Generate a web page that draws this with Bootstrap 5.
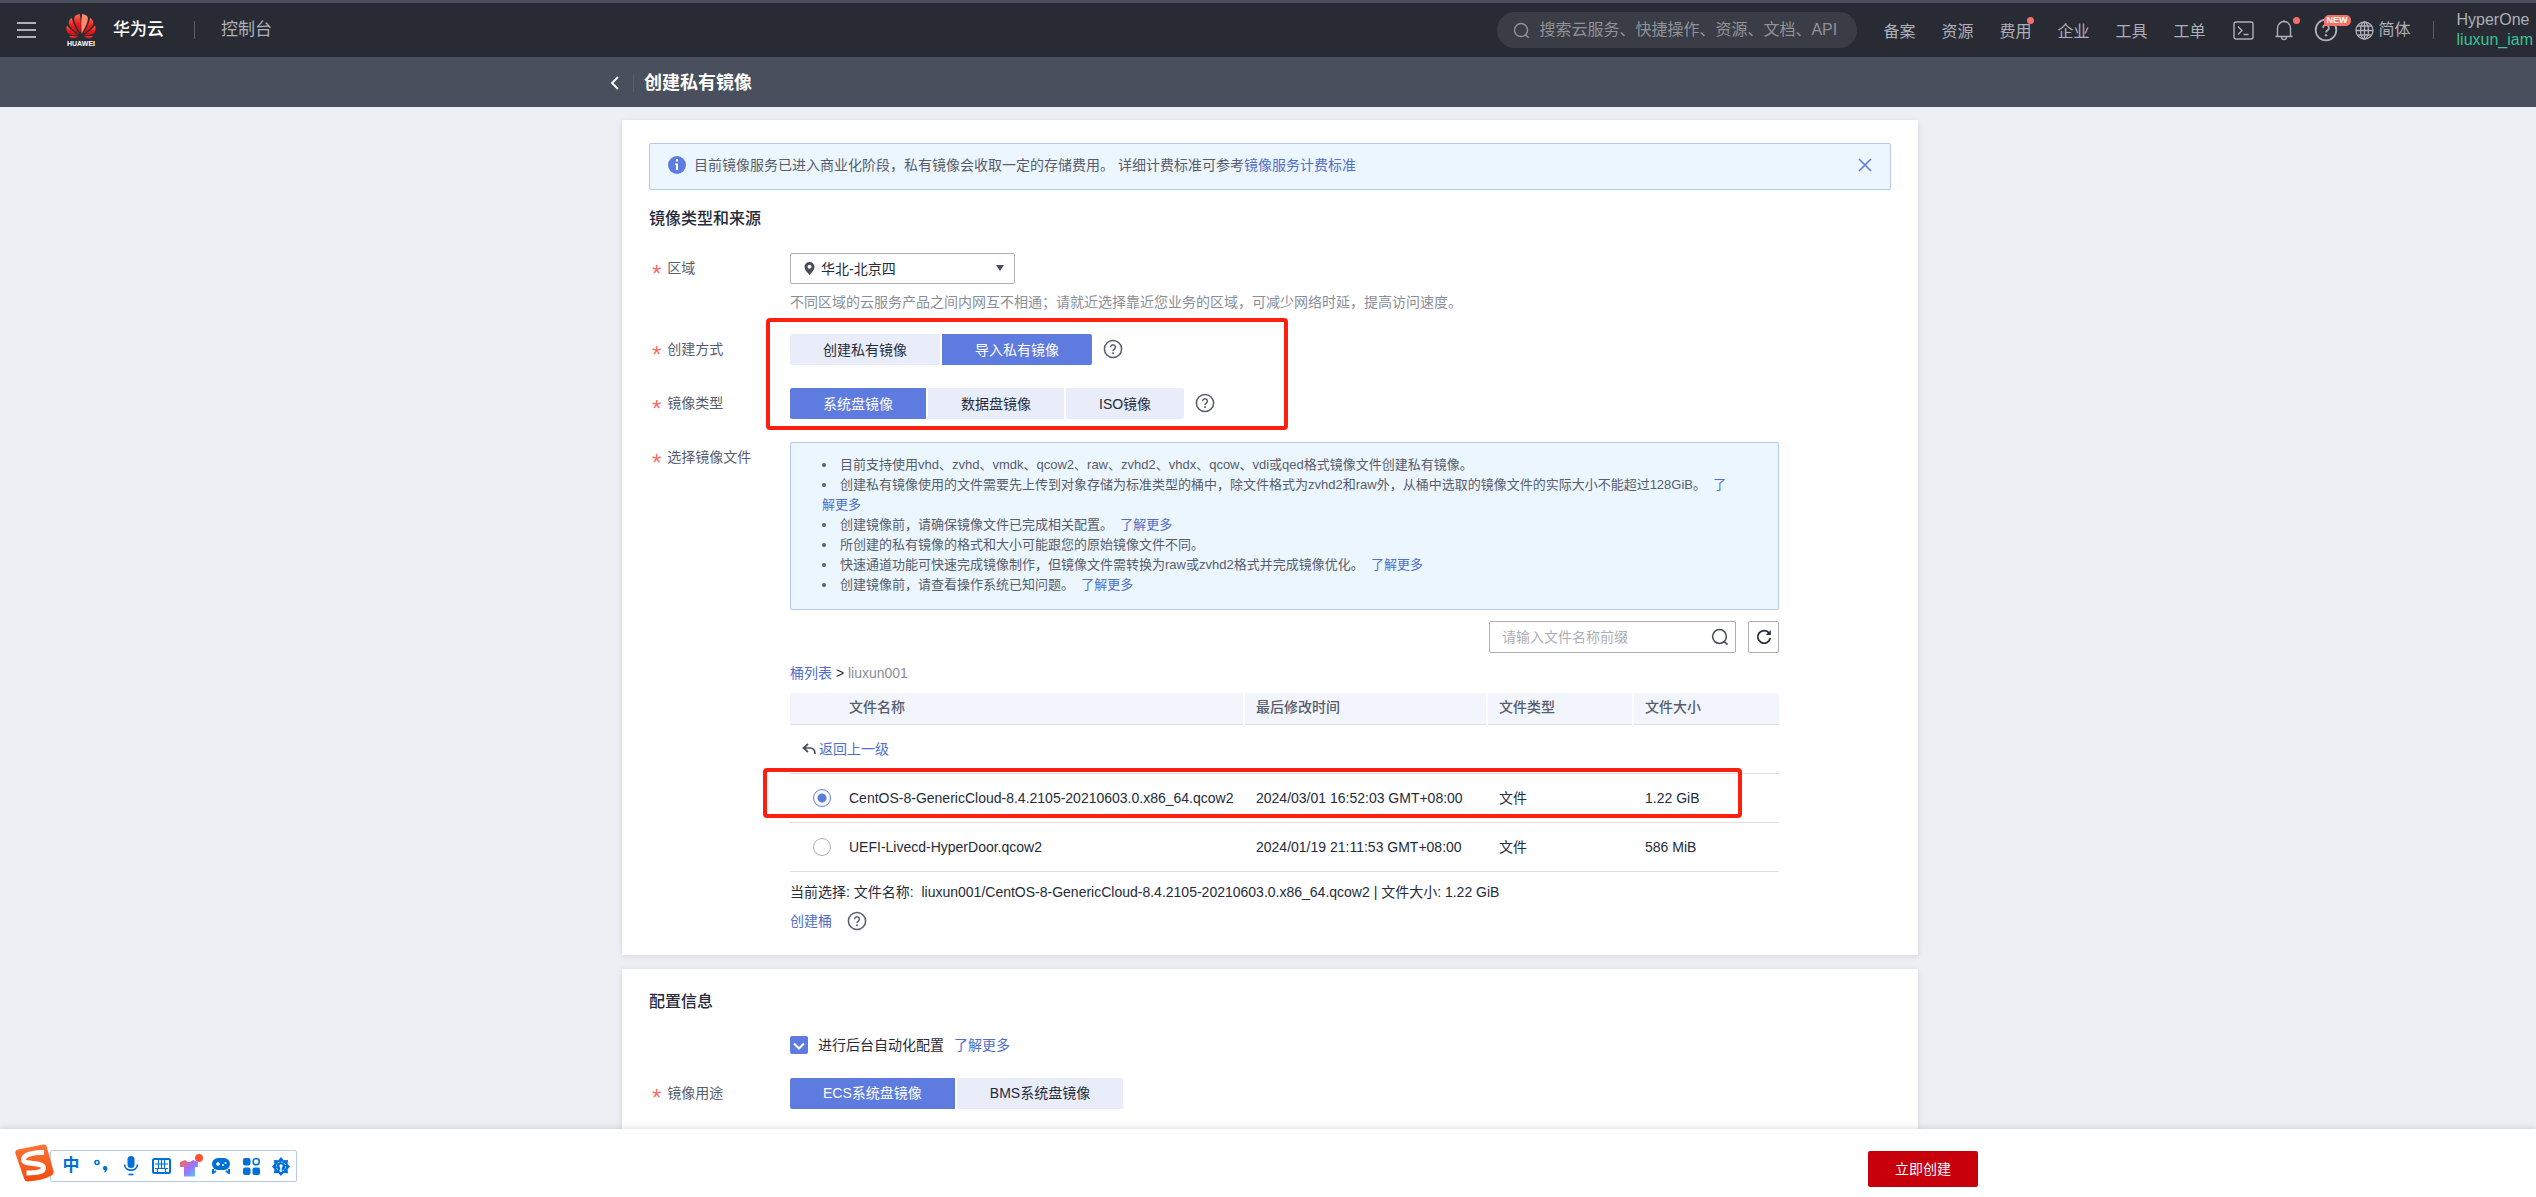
<!DOCTYPE html>
<html lang="zh-CN">
<head>
<meta charset="utf-8">
<meta name="viewport" content="width=device-width, initial-scale=1">
<title>创建私有镜像</title>
<link href="https://cdn.jsdelivr.net/npm/bootstrap@5.3.0/dist/css/bootstrap.min.css" rel="stylesheet">
<style>
body{font-family:"Liberation Sans","Noto Sans CJK SC",sans-serif;font-size:14px;line-height:20px;color:#252b3a;background:#eeeff4}
a{color:#526ecc;text-decoration:none}
button,input,select{font-family:inherit}
svg{display:block;flex:none}
.topnav{background:#282b33;border-top:3px solid #494f5c;height:57px;color:#adb0b8;font-size:16px;padding-left:17px;z-index:3}
.topnav a{color:inherit}
.topnav .logo{margin-left:30px}
.topnav .brandname{color:#fff;font-size:17px;font-weight:500;margin-left:17px}
.topnav .console{font-size:17px;margin-left:26px}
.vline{width:1px;height:18px;background:#575d6c}
.pill{width:360px;height:36px;border-radius:18px;background:#3a3d45;padding:0 16px;gap:9px}
.pill input{background:none;border:0;outline:0;color:#adb0b8;font-size:16px;padding:0}
.pill input::placeholder{color:#8f9299;opacity:1}
.links{gap:26px;margin-left:26px;padding-top:3px}
.plainbtn{background:none;border:0;padding:0;color:inherit}
.reddot{position:absolute;width:7px;height:7px;border-radius:50%;background:#f66f6a}
.dot-text{right:-3px;top:-5px}
.dot-bell{right:-6px;top:-2px}
.newtag{position:absolute;left:10px;top:-3px;background:#f66f6a;color:#fff;font-size:9px;line-height:11px;padding:0 3px;border-radius:5px 5px 5px 0;font-weight:700}
.account{line-height:20px;margin-left:23px;margin-right:3px}
.account .iam{color:#3ac295}
.titlebar{background:#494f5c;height:50px;color:#fff}
.frame{width:100%;max-width:1300px;margin:0 auto;padding-left:4px}
.titlebar .frame{max-width:1324px;padding-top:2px}
.titlebar h1{font-size:18px;line-height:24px;font-weight:700;margin:0 0 0 10px}
.panel{background:#fff;box-shadow:0 1px 6px rgba(37,43,58,.12);padding:23px 27px 24px}
.notice{background:#ebf6ff;border:1px solid #b3c7f9;border-radius:2px;min-height:47px;padding:0 18px 3px;color:#575d6c}
.sect{font-size:16px;line-height:24px;font-weight:500;margin:17px 0 0}
.formrow{display:flex;margin-top:23px}
.flabel{width:141px;flex:none;height:30px;padding-left:3px;color:#575d6c;gap:6px}
.star{color:#f66f6a;font-size:24px;line-height:20px;padding-top:11px}
.field{max-width:989px}
.region{width:225px}
.region select{width:100%;height:31px;border:1px solid #adb0b8;border-radius:2px;appearance:none;background:#fff;padding:0 30px;color:#252b3a;font-size:14px}
.region .pin{position:absolute;left:14px;top:9px;pointer-events:none}
.region .caret{position:absolute;right:11px;top:12px;pointer-events:none}
.hint{color:#8a8e99;margin-top:8px}
.seg{gap:2px}
.seg button{height:31px;border:0;background:#e9edfa;padding:0 33px;color:#252b3a}
.seg button.on{background:#5e7ce0;color:#fff}
.seg button:first-child{border-radius:2px 0 0 2px}
.seg button:last-child{border-radius:0 2px 2px 0}
.qmark{width:20px;height:20px;color:#575d6c}
.seg+.qmark{margin:5px 0 0 11px}
.circled{position:absolute;border:4px solid #ff1f10;border-radius:4px;pointer-events:none;z-index:2}
.circled-modes{left:117px;top:-16px;width:522px;height:112px}
.circled-file{left:-27px;right:37px;top:75px;height:50px}
.tips{background:#ebf6ff;border:1px solid #b3c7f9;border-radius:2px;color:#575d6c;font-size:13px;padding:12px 42px 14px 31px;margin:0;list-style:disc inside}
.finder{width:247px}
.finder input{width:100%;height:32px;border:1px solid #adb0b8;border-radius:2px;padding:0 36px 0 12px;outline:0}
.finder input::placeholder{color:#adb0b8;opacity:1}
.finder button{position:absolute;right:7px;top:7px}
.reload{width:31px;height:32px;border:1px solid #adb0b8;border-radius:2px;background:#fff;color:#252b3a}
.files{width:100%;table-layout:fixed;border-collapse:collapse;margin:0}
.files th{height:31px;background:#f2f5fc;color:#575d6c;font-weight:500;padding:0 0 2px 12px}
.files th+th+th{border-left:2px solid #fff;padding-left:11px}
.files tr{border-bottom:1px solid #dfe1e6}
.files td{height:49px;padding:0 0 0 12px}
.files td.pick{padding-left:23px}
.files input{appearance:none;display:block;width:18px;height:18px;border:1px solid #adb0b8;border-radius:50%;margin:0;background:#fff}
.files input:checked{border-color:#5e7ce0;background:radial-gradient(circle,#5e7ce0 4px,#fff 5px)}
.tick{appearance:none;width:18px;height:18px;border-radius:2px;margin:0;background:#5e7ce0}
.tickmark{position:absolute;left:3px;top:4px;pointer-events:none}
.actionbar{background:#fff;height:68px;box-shadow:0 -1px 6px rgba(37,43,58,.15);padding-top:22px;z-index:3}
.actionbar .frame{max-width:1420px}
.gobtn{width:110px;height:36px;border:0;border-radius:2px;background:#c7000b;color:#fff}
.ime{position:absolute;left:15px;top:15px}
.ime .tray{margin-left:-5px;margin-top:6px;border:1px solid #b8cbe0;border-radius:2px;height:32px;width:247px;background:#fff;padding-left:5px;color:#0070d9}
.ime .tray>*{width:30px;display:flex;justify-content:center}
.ime .lang{font-weight:700;font-size:17px}
</style>
</head>
<body class="vh-100 d-flex flex-column overflow-hidden">
<svg width="0" height="0" class="position-absolute" aria-hidden="true">
<symbol id="help" viewBox="0 0 20 20"><circle cx="10" cy="10" r="8.6" fill="none" stroke="currentColor" stroke-width="1.5"/><path d="M7.6 8.2a2.4 2.4 0 1 1 3.7 2c-.9.6-1.3 1-1.3 1.900" fill="none" stroke="currentColor" stroke-width="1.5"/><circle cx="10" cy="14.3" r="1" fill="currentColor"/></symbol>
<symbol id="lens" viewBox="0 0 18 18"><circle cx="8.5" cy="8.5" r="6.9" fill="none" stroke="currentColor" stroke-width="1.5"/><path d="M13 13.4l3.6 3.3" stroke="currentColor" stroke-width="1.6"/></symbol>
</svg>
<header class="topnav d-flex align-items-center flex-shrink-0">
  <button class="plainbtn" aria-label="菜单"><svg width="19" height="16"><path d="M0 1h19M0 8h19M0 15h19" stroke="#adb0b8" stroke-width="2"/></svg></button>
  <a href="#" class="logo" aria-label="华为"><svg width="30" height="34" viewBox="0 0 30 34">
    <defs><linearGradient id="hw" x1="0" y1="0" x2="0" y2="1"><stop offset="0" stop-color="#ff6a50"/><stop offset=".5" stop-color="#f01a1a"/><stop offset="1" stop-color="#c01016"/></linearGradient></defs>
    <g fill="url(#hw)"><path d="M14.4 20.5C10.500 14.500 7.800 8.500 8.200 4.800 8.500 2.600 11 1.300 13.600 1c1.300 4.400 1.400 13.500.8 19.500z"/><path d="M15.600 20.500C19.500 14.500 22.200 8.500 21.800 4.800 21.500 2.600 19 1.300 16.400 1c-1.300 4.400-1.400 13.500-.8 19.500z" fill="#ff8a6a"/><path d="M13.300 21.200C8 17.800 3.200 14 2.700 10.400 2.400 8.100 4 5.800 5.800 4.700c1.200 5.800 4.600 12.300 7.500 16.500z"/><path d="M16.700 21.200c5.300-3.400 10.100-7.200 10.600-10.800.3-2.300-1.300-4.600-3.100-5.700-1.200 5.800-4.600 12.300-7.500 16.500z"/><path d="M12.800 22.300C7.800 22.600 2.900 22 1.200 19.200.1 17.200.4 14.400 1 12.600c3 4.200 7.600 7.300 11.800 9.700z"/><path d="M17.200 22.300c5 .3 9.900-.3 11.600-3.100 1.100-2 .8-4.800.2-6.600-3 4.200-7.600 7.300-11.800 9.700z"/><path d="M12.300 23.400c-2.300 1.400-4.600 2.300-6.300 1.900-1.400-.3-2.300-1.300-2.700-2.300 3 .4 6 .5 9 .4z"/><path d="M17.700 23.400c2.300 1.400 4.600 2.300 6.300 1.900 1.400-.3 2.300-1.300 2.700-2.300-3 .4-6 .5-9 .4z"/></g>
    <text x="1" y="33" fill="#fff" font-size="7" font-weight="700">HUAWEI</text></svg></a>
  <a href="#" class="brandname">华为云</a>
  <span class="vline" style="margin-left:30px"></span>
  <a href="#" class="console">控制台</a>
  <label class="pill d-flex align-items-center ms-auto"><svg width="17" height="17" style="color:#8f9299"><use href="#lens"/></svg><input class="flex-grow-1" type="text" aria-label="搜索" placeholder="搜索云服务、快捷操作、资源、文档、API"></label>
  <nav class="links d-flex">
    <a href="#">备案</a><a href="#">资源</a><a href="#" class="position-relative">费用<i class="reddot dot-text"></i></a><a href="#">企业</a><a href="#">工具</a><a href="#">工单</a>
  </nav>
  <button class="plainbtn" style="margin-left:27px" aria-label="终端"><svg width="21" height="19" viewBox="0 0 21 19" fill="none" stroke="currentColor" stroke-width="1.4"><rect x="1" y="1" width="19" height="17" rx="2"/><path d="M5 5.500l4 4-4 4M10.500 13.500h5"/></svg></button>
  <button class="plainbtn position-relative" style="margin-left:20px" aria-label="通知"><svg width="20" height="22" viewBox="0 0 20 22" fill="none" stroke="currentColor" stroke-width="1.400"><path d="M1.500 17.500h17M3.500 17V9a6.500 6.500 0 0 1 13 0v8M7.500 18c.2 3.500 4.800 3.500 5 0M10 2.500V1"/></svg><i class="reddot dot-bell"></i></button>
  <button class="plainbtn position-relative" style="margin-left:20px" aria-label="帮助"><svg width="24" height="24"><use href="#help"/></svg><span class="newtag">NEW</span></button>
  <a href="#" class="d-flex align-items-center" style="margin-left:17px;gap:5px"><svg width="19" height="19" viewBox="0 0 19 19" fill="none" stroke="currentColor" stroke-width="1.300"><circle cx="9.500" cy="9.500" r="8.500"/><ellipse cx="9.500" cy="9.500" rx="4" ry="8.500"/><path d="M1 9.500h17M9.500 1v17M2.500 5h14M2.500 14h14"/></svg>简体</a>
  <span class="vline" style="margin-left:22px"></span>
  <div class="account"><div>HyperOne</div><div class="iam">liuxun_iam</div></div>
</header>
<div class="titlebar d-flex align-items-center flex-shrink-0">
  <div class="frame d-flex align-items-center">
    <a href="#" aria-label="返回"><svg width="9" height="14" viewBox="0 0 9 14"><path d="M8 1L2 7l6 6" fill="none" stroke="#fff" stroke-width="1.800"/></svg></a>
    <span class="vline" style="margin-left:14px"></span>
    <h1>创建私有镜像</h1>
  </div>
</div>
<main class="flex-grow-1 overflow-hidden d-flex" style="min-height:0">
  <div class="frame d-flex flex-column" style="padding-top:13px;gap:14px">
    <section class="panel">
      <div class="notice d-flex align-items-center">
        <svg width="18" height="18" class="me-2"><circle cx="9" cy="9" r="9" fill="#5e7ce0"/><rect x="8" y="3" width="2" height="2.500" fill="#fff"/><path d="M7 7.500h3v6.500h-2v-5H7z" fill="#fff"/></svg>
        <div>目前镜像服务已进入商业化阶段，私有镜像会收取一定的存储费用。 详细计费标准可参考<a href="#">镜像服务计费标准</a></div>
        <button class="plainbtn ms-auto" aria-label="关闭"><svg width="14" height="14"><path d="M1 1l12 12M13 1L1 13" stroke="#5e7ce0" stroke-width="1.600"/></svg></button>
      </div>
      <h2 class="sect">镜像类型和来源</h2>
      <div class="formrow" style="margin-top:22px">
        <label class="flabel d-flex align-items-center" for="region"><span class="star">*</span>区域</label>
        <div>
          <div class="region position-relative">
            <select id="region"><option>华北-北京四</option></select>
            <svg class="pin" width="11" height="13" viewBox="0 0 11 13"><path d="M5.500 0A5 5 0 0 0 .5 5c0 3 3 5.500 5 8 2-2.500 5-5 5-8a5 5 0 0 0-5-5z" fill="#464c59"/><circle cx="5.500" cy="4.800" r="2" fill="#fff"/></svg>
            <svg class="caret" width="8" height="6"><path d="M0 0h8L4 6z" fill="#464c59"/></svg>
          </div>
          <div class="hint">不同区域的云服务产品之间内网互不相通；请就近选择靠近您业务的区域，可减少网络时延，提高访问速度。</div>
        </div>
      </div>
      <div class="position-relative" style="margin-top:22px">
        <div class="formrow mt-0">
          <div class="flabel d-flex align-items-center"><span class="star">*</span>创建方式</div>
          <div class="seg d-flex" role="group" aria-label="创建方式"><button>创建私有镜像</button><button class="on">导入私有镜像</button></div>
          <svg class="qmark"><use href="#help"/></svg>
        </div>
        <div class="formrow">
          <div class="flabel d-flex align-items-center"><span class="star">*</span>镜像类型</div>
          <div class="seg d-flex" role="group" aria-label="镜像类型"><button class="on">系统盘镜像</button><button>数据盘镜像</button><button>ISO镜像</button></div>
          <svg class="qmark"><use href="#help"/></svg>
        </div>
        <div class="circled circled-modes"></div>
      </div>
      <div class="formrow">
        <div class="flabel d-flex align-items-center"><span class="star">*</span>选择镜像文件</div>
        <div class="field flex-grow-1">
          <ul class="tips">
            <li>目前支持使用vhd、zvhd、vmdk、qcow2、raw、zvhd2、vhdx、qcow、vdi或qed格式镜像文件创建私有镜像。</li>
            <li>创建私有镜像使用的文件需要先上传到对象存储为标准类型的桶中，除文件格式为zvhd2和raw外，从桶中选取的镜像文件的实际大小不能超过128GiB。&nbsp; <a href="#">了解更多</a></li>
            <li>创建镜像前，请确保镜像文件已完成相关配置。&nbsp; <a href="#">了解更多</a></li>
            <li>所创建的私有镜像的格式和大小可能跟您的原始镜像文件不同。</li>
            <li>快速通道功能可快速完成镜像制作，但镜像文件需转换为raw或zvhd2格式并完成镜像优化。&nbsp; <a href="#">了解更多</a></li>
            <li>创建镜像前，请查看操作系统已知问题。&nbsp; <a href="#">了解更多</a></li>
          </ul>
          <div class="d-flex justify-content-end" style="margin-top:11px;gap:12px">
            <div class="finder position-relative"><input type="text" aria-label="文件名称前缀" placeholder="请输入文件名称前缀"><button class="plainbtn" style="color:#464c59" aria-label="搜索"><svg width="18" height="18"><use href="#lens"/></svg></button></div>
            <button class="reload d-flex align-items-center justify-content-center p-0" aria-label="刷新"><svg width="16" height="16" viewBox="0 0 16 16"><path d="M13.200 4.200A6.300 6.300 0 1 0 14.300 9" fill="none" stroke="currentColor" stroke-width="1.700"/><path d="M14.800 1v5h-5z" fill="currentColor"/></svg></button>
          </div>
          <div style="margin:10px 0"><a href="#">桶列表</a> &gt; <span style="color:#8a8e99">liuxun001</span></div>
          <div class="position-relative">
            <table class="files">
              <colgroup><col style="width:47px"><col><col style="width:243px"><col style="width:146px"><col style="width:146px"></colgroup>
              <thead><tr><th></th><th>文件名称</th><th>最后修改时间</th><th>文件类型</th><th>文件大小</th></tr></thead>
              <tbody>
                <tr><td colspan="5"><a href="#" class="d-flex align-items-center" style="gap:3px"><svg width="14" height="12" viewBox="0 0 14 12"><path d="M6 1L1.500 5 6 9M2 5h6c3 0 5 2 5 6" fill="none" stroke="#464c59" stroke-width="1.700"/></svg>返回上一级</a></td></tr>
                <tr><td class="pick"><input type="radio" name="file" id="f1" checked></td><td><label for="f1">CentOS-8-GenericCloud-8.4.2105-20210603.0.x86_64.qcow2</label></td><td>2024/03/01 16:52:03 GMT+08:00</td><td>文件</td><td>1.22 GiB</td></tr>
                <tr><td class="pick"><input type="radio" name="file" id="f2"></td><td><label for="f2">UEFI-Livecd-HyperDoor.qcow2</label></td><td>2024/01/19 21:11:53 GMT+08:00</td><td>文件</td><td>586 MiB</td></tr>
              </tbody>
            </table>
            <div class="circled circled-file"></div>
          </div>
          <div style="margin-top:10px">当前选择: 文件名称:&nbsp; liuxun001/CentOS-8-GenericCloud-8.4.2105-20210603.0.x86_64.qcow2 | 文件大小: 1.22 GiB</div>
          <div class="d-flex align-items-center" style="margin-top:9px;gap:15px"><a href="#">创建桶</a><svg class="qmark"><use href="#help"/></svg></div>
        </div>
      </div>
    </section>
    <section class="panel flex-grow-1" style="padding-top:4px">
      <h2 class="sect">配置信息</h2>
      <div class="d-flex align-items-center" style="margin:21px 0 0 141px;gap:10px">
        <span class="position-relative d-flex"><input class="tick" type="checkbox" id="auto" checked><svg class="tickmark" width="12" height="10"><path d="M1 3.500l5 5 5-5" fill="none" stroke="#fff" stroke-width="2"/></svg></span>
        <label for="auto">进行后台自动化配置</label><a href="#">了解更多</a>
      </div>
      <div class="formrow">
        <div class="flabel d-flex align-items-center"><span class="star">*</span>镜像用途</div>
        <div class="seg d-flex" role="group" aria-label="镜像用途"><button class="on">ECS系统盘镜像</button><button>BMS系统盘镜像</button></div>
      </div>
    </section>
  </div>
</main>
<footer class="actionbar position-relative flex-shrink-0">
  <div class="frame d-flex justify-content-end"><button class="gobtn">立即创建</button></div>
  <div class="ime d-flex align-items-center">
    <svg width="40" height="38" viewBox="0 0 40 38" style="z-index:1"><defs><linearGradient id="sg" x1="0" y1="0" x2="0" y2="1"><stop offset="0" stop-color="#ff7336"/><stop offset="1" stop-color="#f04c10"/></linearGradient></defs><path d="M3 5.500L28 .6q3-.6 3.800 2.200L38.500 27q.8 3-2 4.500-9 5-23.500 6-3 .2-3.800-2.600L.4 9.500Q-.4 6.300 3 5.500z" fill="url(#sg)"/><path d="M29 8.500C20 8 8 10 8.500 16c.5 5 19 2 20 7.500.8 4.500-7 5.500-17 5.500" fill="none" stroke="#fff" stroke-width="5"/></svg>
    <div class="tray d-flex align-items-center">
      <span class="lang">中</span>
      <span><svg width="16" height="16" viewBox="0 0 16 16"><circle cx="4" cy="4.500" r="2" fill="none" stroke="currentColor" stroke-width="1.600"/><path d="M12 8a2 2 0 1 0 0 4.200c0 1-.5 1.800-1.500 2.300C13 14.500 14.500 12.500 14.400 10A2.300 2.300 0 0 0 12 8z" fill="currentColor"/></svg></span>
      <span><svg width="16" height="20" viewBox="0 0 16 20"><rect x="4.500" y="0" width="7" height="12" rx="3.500" fill="currentColor"/><path d="M1.500 8.500c.5 7.500 12.500 7.500 13 0" fill="none" stroke="currentColor" stroke-width="1.700"/><path d="M5.500 18.500h5" stroke="currentColor" stroke-width="1.700"/></svg></span>
      <span><svg width="19" height="16" viewBox="0 0 19 16"><rect x="1" y="1" width="17" height="14" rx="1.500" fill="none" stroke="currentColor" stroke-width="2"/><path d="M3 6h13M3 10.500h13M6.500 2v8.500M9.500 2v8.500M12.500 2v8.500M5.500 10v4M13.500 10v4" stroke="currentColor" stroke-width="1.200"/></svg></span>
      <span><svg width="24" height="24" viewBox="0 0 24 24"><defs><linearGradient id="ts" x1="0" y1="0" x2="1" y2="1"><stop offset="0" stop-color="#ff6a3c"/><stop offset=".5" stop-color="#a070ff"/><stop offset="1" stop-color="#40d8ff"/></linearGradient></defs><path d="M6 6q4 4 8 0l5 2v5h-3v9.500H5V13H1V8z" fill="url(#ts)"/><circle cx="20" cy="4" r="4" fill="#ff5533"/></svg></span>
      <span><svg width="20" height="16" viewBox="0 0 20 16"><rect x="1" y="0" width="18" height="12" rx="6" fill="currentColor"/><path d="M5 6h4M7 4v4" stroke="#fff" stroke-width="1.400"/><circle cx="12" cy="7" r="1" fill="#fff"/><circle cx="14.500" cy="5" r="1" fill="#fff"/><path d="M2 11v4l3-2M18 11v4l-3-2" fill="none" stroke="currentColor" stroke-width="2"/></svg></span>
      <span><svg width="17" height="17" viewBox="0 0 17 17" fill="currentColor"><rect width="7.500" height="7.500" rx="2"/><rect y="9.500" width="7.500" height="7.500" rx="2"/><rect x="9.500" y="9.500" width="7.500" height="7.500" rx="2"/><rect x="10.300" y=".8" width="5.800" height="5.800" rx="2" fill="none" stroke="currentColor" stroke-width="1.600"/></svg></span>
      <span><svg width="18" height="19" viewBox="0 0 18 19"><path d="M9 0l2.700 3.200L16 3l-.4 4L18 9.500l-2.400 2.700.4 4-4.300-.2L9 19l-2.700-3L2 16.200l.4-4L0 9.500 2.400 7 2 3l4.300.2z" fill="currentColor"/><circle cx="9" cy="9.500" r="4.600" fill="none" stroke="#fff" stroke-width=".8" stroke-dasharray="2 1.500"/><circle cx="9" cy="9" r="1.700" fill="#fff"/><path d="M9 9v6" stroke="#fff" stroke-width="1.500"/></svg></span>
    </div>
  </div>
</footer>
<script src="https://cdn.jsdelivr.net/npm/bootstrap@5.3.0/dist/js/bootstrap.bundle.min.js"></script>
</body>
</html>
